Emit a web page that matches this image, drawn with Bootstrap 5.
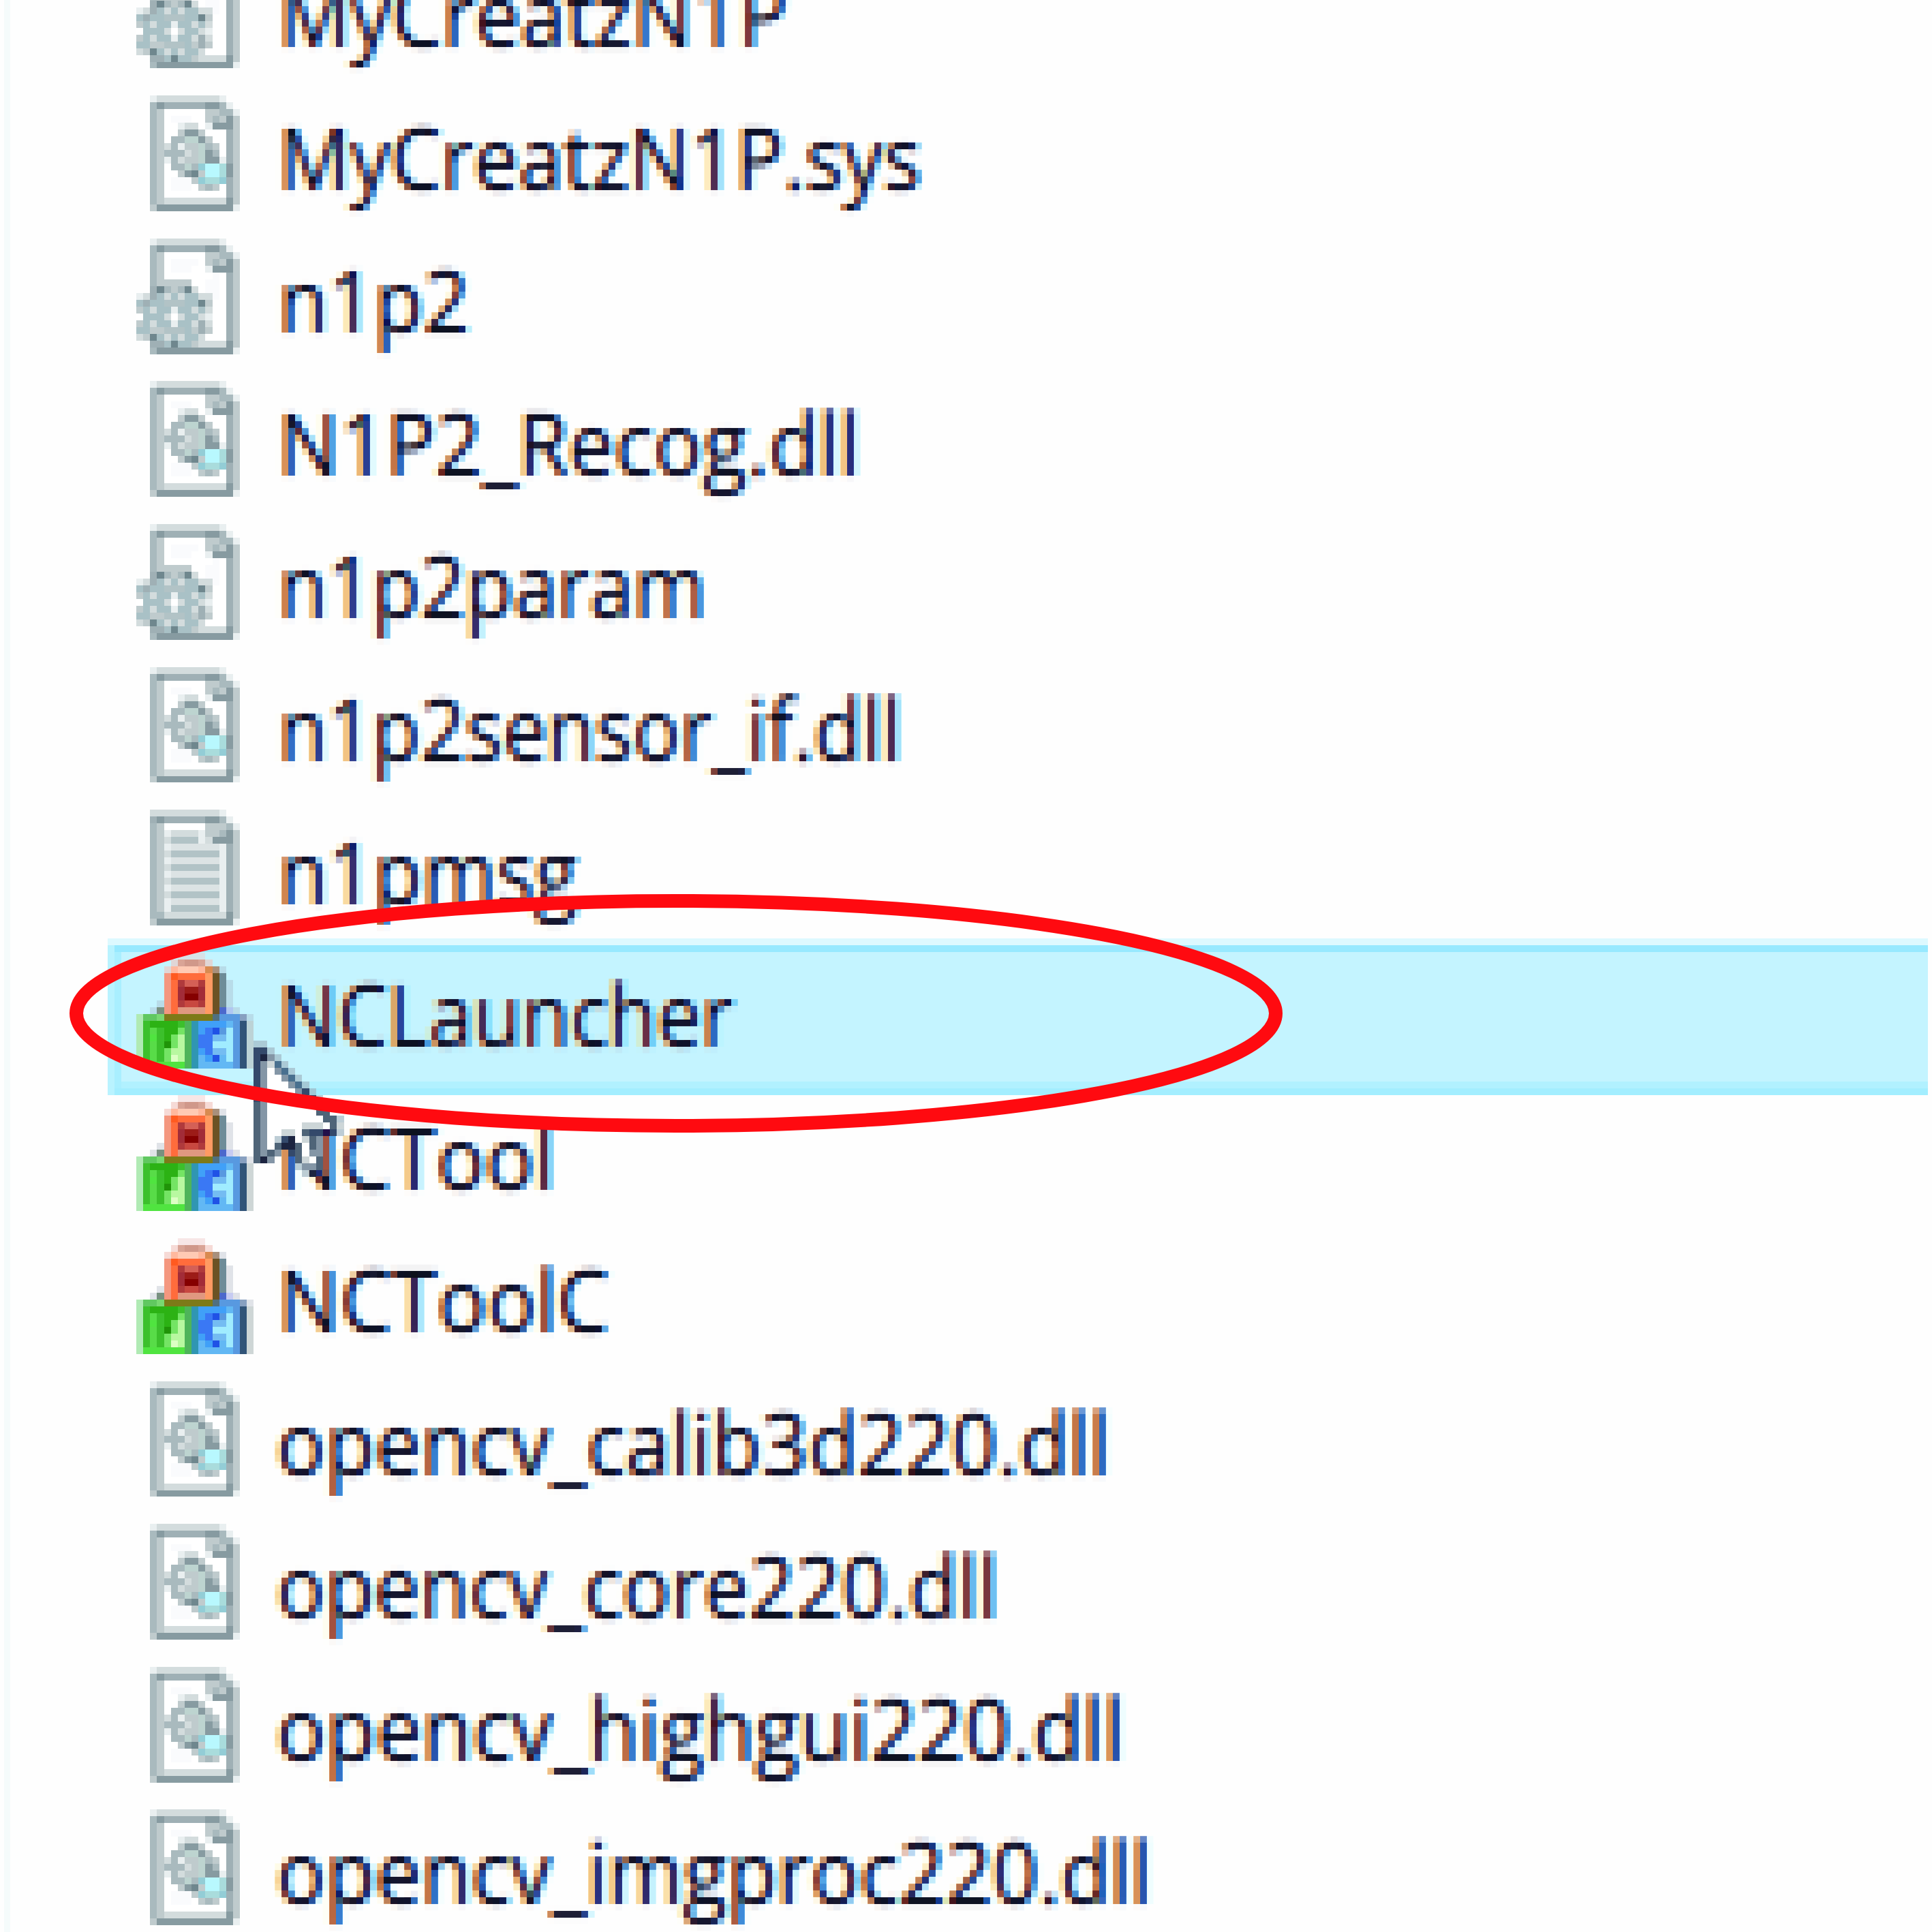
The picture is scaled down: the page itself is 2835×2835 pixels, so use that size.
<!DOCTYPE html>
<html lang="en">
<head>
<meta charset="utf-8">
<title>File list</title>
<link href="https://cdn.jsdelivr.net/npm/bootstrap@5.3.0/dist/css/bootstrap.min.css" rel="stylesheet">
<style>
  html, body { width: 2835px; height: 2835px; overflow: hidden; background: #fefefe; }
  .explorer { width: 2835px; height: 2835px; background: #fefefe; }
  .pane-edge { left: 6px; top: 0; width: 9px; height: 100%; background: #f5fbfb; }
  .file-list { margin-top: -80px; padding-left: 158px; padding-right: 6px; }
  .file-row { height: 209.6px; padding-left: 41.5px; }
  .file-row.selected::before {
    content: ""; position: absolute; left: 0; right: 0; top: -10px; height: 230px;
    background:
      linear-gradient(#ddf9ff, #ddf9ff) 0 0 / 100% 10px no-repeat,
      linear-gradient(#97e9ff, #97e9ff) 10px 10px / 100% 10px no-repeat,
      linear-gradient(#a3eeff, #a3eeff) 10px 220px / 100% 10px no-repeat,
      linear-gradient(#b1f1ff, #b1f1ff) 20px 210px / 100% 10px no-repeat,
      linear-gradient(90deg, #b9f3ff 10px, #a9efff 10px 20px, #c4f4ff 20px);
  }
  .file-icon { width: 172.5px; height: 169.7px; margin-top: 10.7px; }
  .file-label { width: 1500px; height: 209.6px; margin-top: -1px; margin-left: 21px; filter: url(#lcd); }
  .file-name {
    display: inline-block; font-family: "Open Sans", "Noto Sans", sans-serif; font-size: 126px;
    line-height: 202px; color: #000; white-space: pre; transform-origin: 0 0;
  }
  .pointer { left: 372px; top: 1527px; width: 132.6px; height: 200px; }
  .ring { left: 0; top: 0; width: 2835px; height: 2835px; }
</style>
</head>
<body>
<svg width="0" height="0" class="position-absolute">
  <!-- LCD text rendering on a 10px grid: each colour channel is sampled a third of a cell apart -->
  <filter id="lcd" filterUnits="userSpaceOnUse" x="0" y="0" width="1500" height="210" color-interpolation-filters="sRGB">
    <feFlood x="4" y="4" width="2" height="2" flood-color="#000" result="dot"/>
    <feComposite in="dot" in2="dot" operator="over" x="0" y="0" width="10" height="10" result="cell"/>
    <feTile in="cell" result="grid"/>
    <feGaussianBlur in="SourceAlpha" stdDeviation="3.8 2.6" result="soft"/>
    <feOffset in="soft" dx="3.4" result="sr"/>
    <feComposite in="sr" in2="grid" operator="in"/>
    <feMorphology operator="dilate" radius="4"/>
    <feColorMatrix values="0 0 0 0 0.05  0 0 0 0 1  0 0 0 0 1  0 0 0 1.08 0" result="r"/>
    <feComposite in="soft" in2="grid" operator="in"/>
    <feMorphology operator="dilate" radius="4"/>
    <feColorMatrix values="0 0 0 0 1  0 0 0 0 0.07  0 0 0 0 1  0 0 0 1.1 0" result="g"/>
    <feOffset in="soft" dx="-3.4" result="sb"/>
    <feComposite in="sb" in2="grid" operator="in"/>
    <feMorphology operator="dilate" radius="4"/>
    <feColorMatrix values="0 0 0 0 1  0 0 0 0 1  0 0 0 0 0.1  0 0 0 1.02 0" result="b"/>
    <feBlend in="r" in2="g" mode="multiply" result="rg"/>
    <feBlend in="rg" in2="b" mode="multiply"/>
  </filter>
</svg>

<main class="explorer position-relative overflow-hidden">
  <div class="pane-edge position-absolute"></div>
  <div class="file-list d-flex flex-column" id="list"></div>
  <svg class="pointer position-absolute" id="pointer" viewBox="0 0 13 20" preserveAspectRatio="none" shape-rendering="crispEdges"></svg>
  <svg class="ring position-absolute" viewBox="0 0 2835 2835">
    <ellipse cx="992" cy="1487" rx="880" ry="165" fill="none" stroke="#ff0a10" stroke-width="20"/>
  </svg>
</main>

<script src="https://cdn.jsdelivr.net/npm/bootstrap@5.3.0/dist/js/bootstrap.bundle.min.js"></script>
<script>
  // Pixel icons: one character per pixel, '.' is transparent.
  const PAGE = { f:'#e9eff0', L:'#d3dcdd', l:'#bfcbcd', m:'#a9babe', M:'#9fb0b5', D:'#879ba1', X:'#6f878e',
                 w:'#ffffff', v:'#fafbfd', c:'#bdd4d0', t:'#a9dcdc', a:'#93cdd6', C:'#b8f8fe', s:'#dce3e4', b:'#b2c3c6',
                 g:'#a9c1c6' };
  const DLL = [
    '..fLLLLLLLLLf....',
    '..mDMMMMMMDDmf...',
    '..mlwwwwwwllmmf..',
    '..mlwvvvwwlmlDl..',
    '..mlwwfLLwfDDDl..',
    '..mlwwlDDlwwwMl..',
    '..mlwmmccDlwwMl..',
    '..mlLmfllcmlwMl..',
    '..mlmmmLlcDmwMl..',
    '..mlfmLllcDDfMl..',
    '..mlwmmcmaCCtDl..',
    '..mlwwlDXlCCtDl..',
    '..mlwvvvlattaMl..',
    '..mlwvvvwlmlwMl..',
    '..mlwwwwwwwwwMl..',
    '..mlLLLLLLLLLDl..',
    '..lDDDDDDDDDDDf..'];
  const INI = [
    '..fLLLLLLLLLf....',
    '..mDMMMMMMDDmf...',
    '..mlwwwwwwllmmf..',
    '..mlwvvvvwlmlDl..',
    '..mlwvvvwwfDDDl..',
    '..mlwwwwwwwvwMl..',
    '..mlllllwwvvwMl..',
    '..MXmlmXLwvvwMl..',
    'fLMgLgLggLLvwMl..',
    'gMggbbbggXlwwMl..',
    'lgLggfggLgLwwMl..',
    'wgggLwLggLfwwMl..',
    'lgLggfggLMLwwMl..',
    'ggllbbbglMlwwMl..',
    'LlXgLgLggLwwwMl..',
    '..MMgXgglLLLLDl..',
    '..mDDDDDDDDDDDf..'];
  const TXT = [
    '..LLLLLLLLLLf....',
    '..MDMMMMMMDDmf...',
    '..mlwwwwwwlllmf..',
    '..mlfLLLLfllmDl..',
    '..mlLbbbbfLDDDl..',
    '..mlfsssssssfMl..',
    '..mlLbbbbbbbfMl..',
    '..mlfsssssssfMl..',
    '..mlLbbbbbbbfMl..',
    '..mlfsssssssfMl..',
    '..mlLbbbbbbbfMl..',
    '..mlfsssssssfMl..',
    '..mlLbbbbbbbfMl..',
    '..mlfsssssssfMl..',
    '..mlfbbbbbbbfMl..',
    '..mmLLLLLLLLLDl..',
    '..lDDDDDDDDDDDf..'];
  const BLOCK = { '1':'#f0c8c870', '2':'#f0c4bea0', '3':'#d9a496', '4':'#d0988a', '5':'#ffb89e', '6':'#ffcab4', '7':'#d98a50', '8':'#a8907c',
    '9':'#f4977f', 'A':'#ff5a20', 'B':'#ff6c3c', 'C':'#ff9a62', 'D':'#6b5224', 'E':'#6e8c98', 'F':'#b03a3c', 'G':'#d46056', 'H':'#9c1c18',
    'I':'#850000', 'J':'#a22c38', 'K':'#c84840', 'L':'#e09880', 'M':'#7d7a18', 'N':'#4c68cc', 'O':'#a4aceaa0', 'P':'#a0a8b850', 'Q':'#789080',
    'a':'#60c860', 'b':'#78d870', 'c':'#b0eab4', 'd':'#2cb214', 'e':'#3cc02c', 'f':'#58dc48', 'g':'#209408', 'h':'#74e464', 'i':'#b8f8a0',
    'j':'#dcffc4', 'k':'#4eb45a', 'l':'#50e440', 'm':'#3096b2', 'n':'#40a0f8', 'o':'#3a78f4', 'p':'#2052e6', 'q':'#74bcf2', 'r':'#a0ecff',
    's':'#5899e0', 't':'#315478', 'u':'#b8c4c4b0', 'v':'#62b8f4', 'w':'#88a0c0', 'x':'#507080' };
  const APP = [
    '......1111.......',
    '.....234432......',
    '....25666578P....',
    '....9ABBBBCDE....',
    '....9BFGGFCDEP...',
    '....9BJHHJCDEP...',
    '....9BJIIJCDEP...',
    '...P9BFKKFCDEP...',
    '..PQ9BLLLLCDNOP..',
    'caabMMMMMMMxssswP',
    'ceddddekmnnnnvstu',
    'cefeddhkmnopsrstu',
    'celedhikmooqqrstu',
    'cefeghikmoorrrstu',
    'cefehiikmnoqqrstu',
    'cefehjikmvnpvrstu',
    'cllllllkmvvvvvstu'];
  const CURSOR = { k:'#1c2440', d:'#34496b', g:'#4f6478', h:'#8496a6', l:'#9fb6c4b0', w:'#ffffff', e:'#cdd6d8', b:'#49708f', n:'#23104a' };
  const ARROW = [
    'll...........',
    'ddl..........',
    'dkhl.........',
    'dhebl........',
    'dhwhbl.......',
    'dhwwhbl......',
    'dhwwwhbl.....',
    'dhwwwwhdl....',
    'dhwwwwwhdl...',
    'ghwwwwwwhdl..',
    'ghwwwwwwwgg..',
    'ghwwwwwwwwggl',
    'ghwwwwweeewge',
    'ghwweewgddndl',
    'ghwldkwegh...',
    'ghwgkkgwgh...',
    'ghgh.dgwhh...',
    'gkh...gewg...',
    '......lhhg...',
    '.......lk....'];

  function pixels(rows, pal) {
    let s = '';
    rows.forEach((row, y) => {
      for (let x = 0; x < row.length;) {
        let n = 1;
        while (row[x + n] === row[x]) n++;
        if (row[x] !== '.') s += `<rect x="${x}" y="${y}" width="${n}" height="1" fill="${pal[row[x]]}"/>`;
        x += n;
      }
    });
    return s;
  }

  // name, icon, left and right edge of the ink
  const files = [
    ['MyCreatzN1P', INI, 419, 1150],
    ['MyCreatzN1P.sys', DLL, 419, 1347],
    ['n1p2', INI, 418, 683],
    ['N1P2_Recog.dll', DLL, 419, 1252],
    ['n1p2param', INI, 418, 1027],
    ['n1p2sensor_if.dll', DLL, 418, 1314],
    ['n1pmsg', TXT, 418, 845],
    ['NCLauncher', APP, 419, 1075],
    ['NCTool', APP, 419, 805],
    ['NCToolC', APP, 419, 890],
    ['opencv_calib3d220.dll', DLL, 412, 1619],
    ['opencv_core220.dll', DLL, 412, 1456],
    ['opencv_highgui220.dll', DLL, 412, 1640],
    ['opencv_imgproc220.dll', DLL, 412, 1680]
  ];
  const ctx = document.createElement('canvas').getContext('2d');
  ctx.font = '126px "Open Sans", "Noto Sans", sans-serif';
  document.getElementById('list').innerHTML = files.map(([name, icon, x0, x1]) => {
    const m = ctx.measureText(name);
    const k = (x1 - x0) / (m.actualBoundingBoxRight + m.actualBoundingBoxLeft);
    const dx = x0 - 393 + m.actualBoundingBoxLeft * k;
    const sel = name === 'NCLauncher' ? ' selected' : '';
    return `<div class="file-row d-flex align-items-start flex-shrink-0 position-relative${sel}">
      <svg class="file-icon flex-shrink-0 position-relative" viewBox="0 0 17 17" preserveAspectRatio="none" shape-rendering="crispEdges">${pixels(icon, icon === APP ? BLOCK : PAGE)}</svg>
      <div class="file-label flex-shrink-0 position-relative"><span class="file-name" style="transform:translateX(${dx.toFixed(2)}px) scaleX(${k.toFixed(4)})">${name}</span></div>
    </div>`;
  }).join('');
  document.getElementById('pointer').innerHTML = pixels(ARROW, CURSOR);
</script>
</body>
</html>
